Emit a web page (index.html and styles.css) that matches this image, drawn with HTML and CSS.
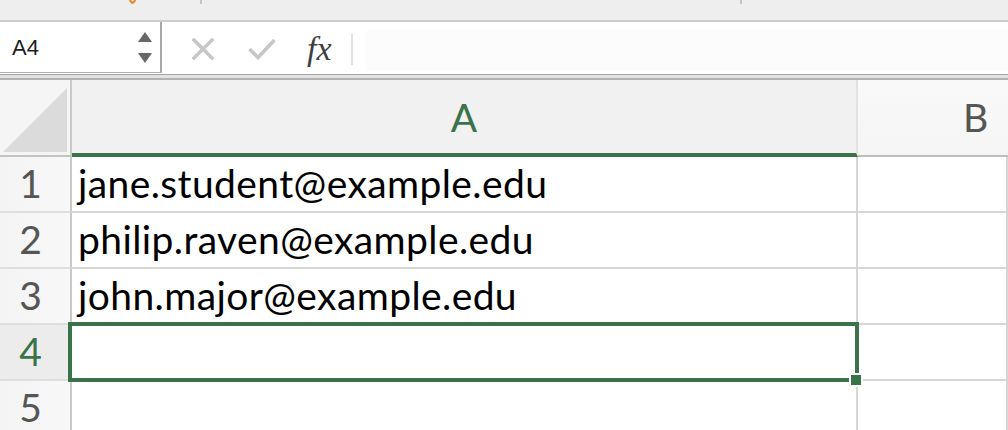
FILE: index.html
```html
<!DOCTYPE html>
<html>
<head>
<meta charset="utf-8">
<link rel="stylesheet" href="styles.css">
</head>
<body>
<div class="app">
  <div class="topbar">
    <svg class="tb-orange" width="7" height="4" viewBox="0 0 7 4"><path d="M0.5 0 L3.5 3.2 L6.5 0" fill="none" stroke="#e8862c" stroke-width="2"/></svg>
    <span class="tb-tick tb-tick1"></span>
    <span class="tb-tick tb-tick2"></span>
  </div>
  <div class="fbar">
    <div class="namebox">
      <span class="nb-text">A4</span>
      <span class="nb-arrows">
        <svg width="14" height="10" viewBox="0 0 14 10"><path d="M7 0 L14 10 L0 10 Z" fill="#676767"/></svg>
        <svg width="14" height="10" viewBox="0 0 14 10"><path d="M0 0 L14 0 L7 10 Z" fill="#676767"/></svg>
      </span>
    </div>
    <div class="fbtns">
      <svg class="ico-x" width="22" height="22" viewBox="0 0 22 22"><path d="M2 2 L20 20 M20 2 L2 20" stroke="#c6c6c6" stroke-width="3.4" stroke-linecap="square"/></svg>
      <svg class="ico-check" width="28" height="22" viewBox="0 0 28 22"><path d="M1.5 11 L10 19.5 L26.5 2" fill="none" stroke="#c6c6c6" stroke-width="3.6"/></svg>
      <span class="fx">fx</span>
    </div>
    <div class="fsep"></div>
    <div class="finput"></div>
  </div>
  <div class="fgap"></div>
  <div class="sheet">
    <div class="corner"><svg width="64" height="64" viewBox="0 0 64 64"><path d="M64 0 L64 64 L0 64 Z" fill="#dbdbdb"/></svg></div>
    <div class="colhead colhead-sel">A</div>
    <div class="colhead colhead-b">B</div>

    <div class="rowhead">1</div>
    <div class="cell">jane.student@example.edu</div>
    <div class="cell"></div>

    <div class="rowhead">2</div>
    <div class="cell">philip.raven@example.edu</div>
    <div class="cell"></div>

    <div class="rowhead">3</div>
    <div class="cell">john.major@example.edu</div>
    <div class="cell"></div>

    <div class="rowhead rowhead-sel">4</div>
    <div class="cell cell-active"><span class="selbox"><span class="handle"></span></span></div>
    <div class="cell"></div>

    <div class="rowhead">5</div>
    <div class="cell"></div>
    <div class="cell"></div>
  </div>
</div>
</body>
</html>
```

FILE: styles.css
```css
* { box-sizing: border-box; }
html, body { margin: 0; padding: 0; }
body {
  width: 1008px;
  height: 430px;
  overflow: hidden;
  background: #ffffff;
  font-family: "Lato", "Liberation Sans", sans-serif;
}
.app { width: 1008px; overflow: hidden; }

.topbar {
  height: 22px;
  background: #eeeeee;
  border-bottom: 2px solid #cdcdcd;
  display: flex;
  align-items: flex-start;
}
.tb-orange { margin-left: 129px; display: block; }
.tb-tick { display: block; width: 2px; height: 4px; background: #c4c4c4; }
.tb-tick1 { margin-left: 64px; }
.tb-tick2 { margin-left: 538px; }

.fbar {
  height: 53px;
  display: flex;
  align-items: stretch;
  background: #ffffff;
  border-bottom: 1px solid #a4a4a4;
}
.namebox {
  width: 162px;
  flex: none;
  border-right: 2px solid #a9a9a9;
  border-bottom: 1px solid #b0b0b0;
  margin-bottom: 1px;
  display: flex;
  align-items: center;
  justify-content: space-between;
  padding: 0 8px 0 12px;
}
.nb-text {
  font-family: "Liberation Sans", Arial, sans-serif;
  font-size: 22px;
  color: #1e1e1e;
  padding-top: 2px;
}
.nb-arrows {
  display: flex;
  flex-direction: column;
  gap: 11px;
  padding-top: 1px;
}
.nb-arrows svg { display: block; }

.fbtns {
  display: flex;
  align-items: center;
  padding-left: 30px;
  flex: none;
}
.ico-x { display: block; margin-top: 2px; }
.ico-check { display: block; margin-left: 34px; margin-top: 1px; }
.fx {
  display: block;
  width: 31px;
  font-family: "Liberation Serif", "Times New Roman", serif;
  font-style: italic;
  font-size: 34px;
  line-height: 34px;
  color: #3f3f3f;
  margin-left: 31px;
  padding-top: 2px;
}
.fsep {
  width: 2px;
  flex: none;
  background: #e2e2e2;
  margin: 12px 0 9px 13px;
}
.finput {
  flex: 1;
  background: #fcfcfc;
  margin: 8px 0 3px 13px;
}
.fgap {
  height: 5px;
  background: #e3e3e3;
  border-bottom: 2px solid #b2b2b2;
}

.sheet {
  display: grid;
  grid-template-columns: 72px 786px 1fr;
  grid-template-rows: 77px repeat(5, 56px);
}
.corner {
  background: #f5f5f5;
  border-right: 2px solid #c9c9c9;
  border-bottom: 2px solid #c4c4c4;
  display: flex;
  align-items: flex-end;
  justify-content: flex-end;
  padding: 0 3px 3px 0;
}
.corner svg { display: block; }
.colhead {
  background: linear-gradient(#f9f9f9, #f5f5f5);
  border-bottom: 2px solid #bdbdbd;
  display: flex;
  align-items: center;
  justify-content: center;
  font-size: 39px;
  line-height: 39px;
  color: #555555;
  padding-top: 0;
}
.colhead-sel {
  background: #f1f1f1;
  border-bottom: 4px solid #3a7249;
  border-right: 2px solid #e2e2e2;
  color: #3a7249;
  padding-top: 2px;
}
.colhead-b {
  justify-content: flex-start;
  padding-left: 105px;
}
.rowhead {
  background: linear-gradient(90deg, #f4f4f4, #f8f8f8);
  border-right: 2px solid #c9c9c9;
  border-bottom: 2px solid #dedede;
  display: flex;
  align-items: flex-end;
  justify-content: center;
  padding: 0 9px 8px 0;
  font-size: 39px;
  line-height: 39px;
  color: #555555;
}
.rowhead-sel {
  background: #ececec;
  color: #3a7249;
}
.cell {
  border-right: 2px solid #d6d6d6;
  border-bottom: 2px solid #d6d6d6;
  display: flex;
  align-items: flex-end;
  padding: 0 0 8px 6px;
  font-size: 39px;
  line-height: 39px;
  letter-spacing: 0.4px;
  color: #000000;
  white-space: nowrap;
  overflow: visible;
}
.cell-active { position: relative; }
.selbox {
  position: absolute;
  left: -4px;
  top: -3px;
  right: -3px;
  bottom: -3px;
  border: 4px solid #3a7249;
}
.handle {
  position: absolute;
  width: 10px;
  height: 10px;
  right: -6px;
  bottom: -7px;
  background: #3a7249;
  box-shadow: 0 0 0 2px #ffffff;
}
```
